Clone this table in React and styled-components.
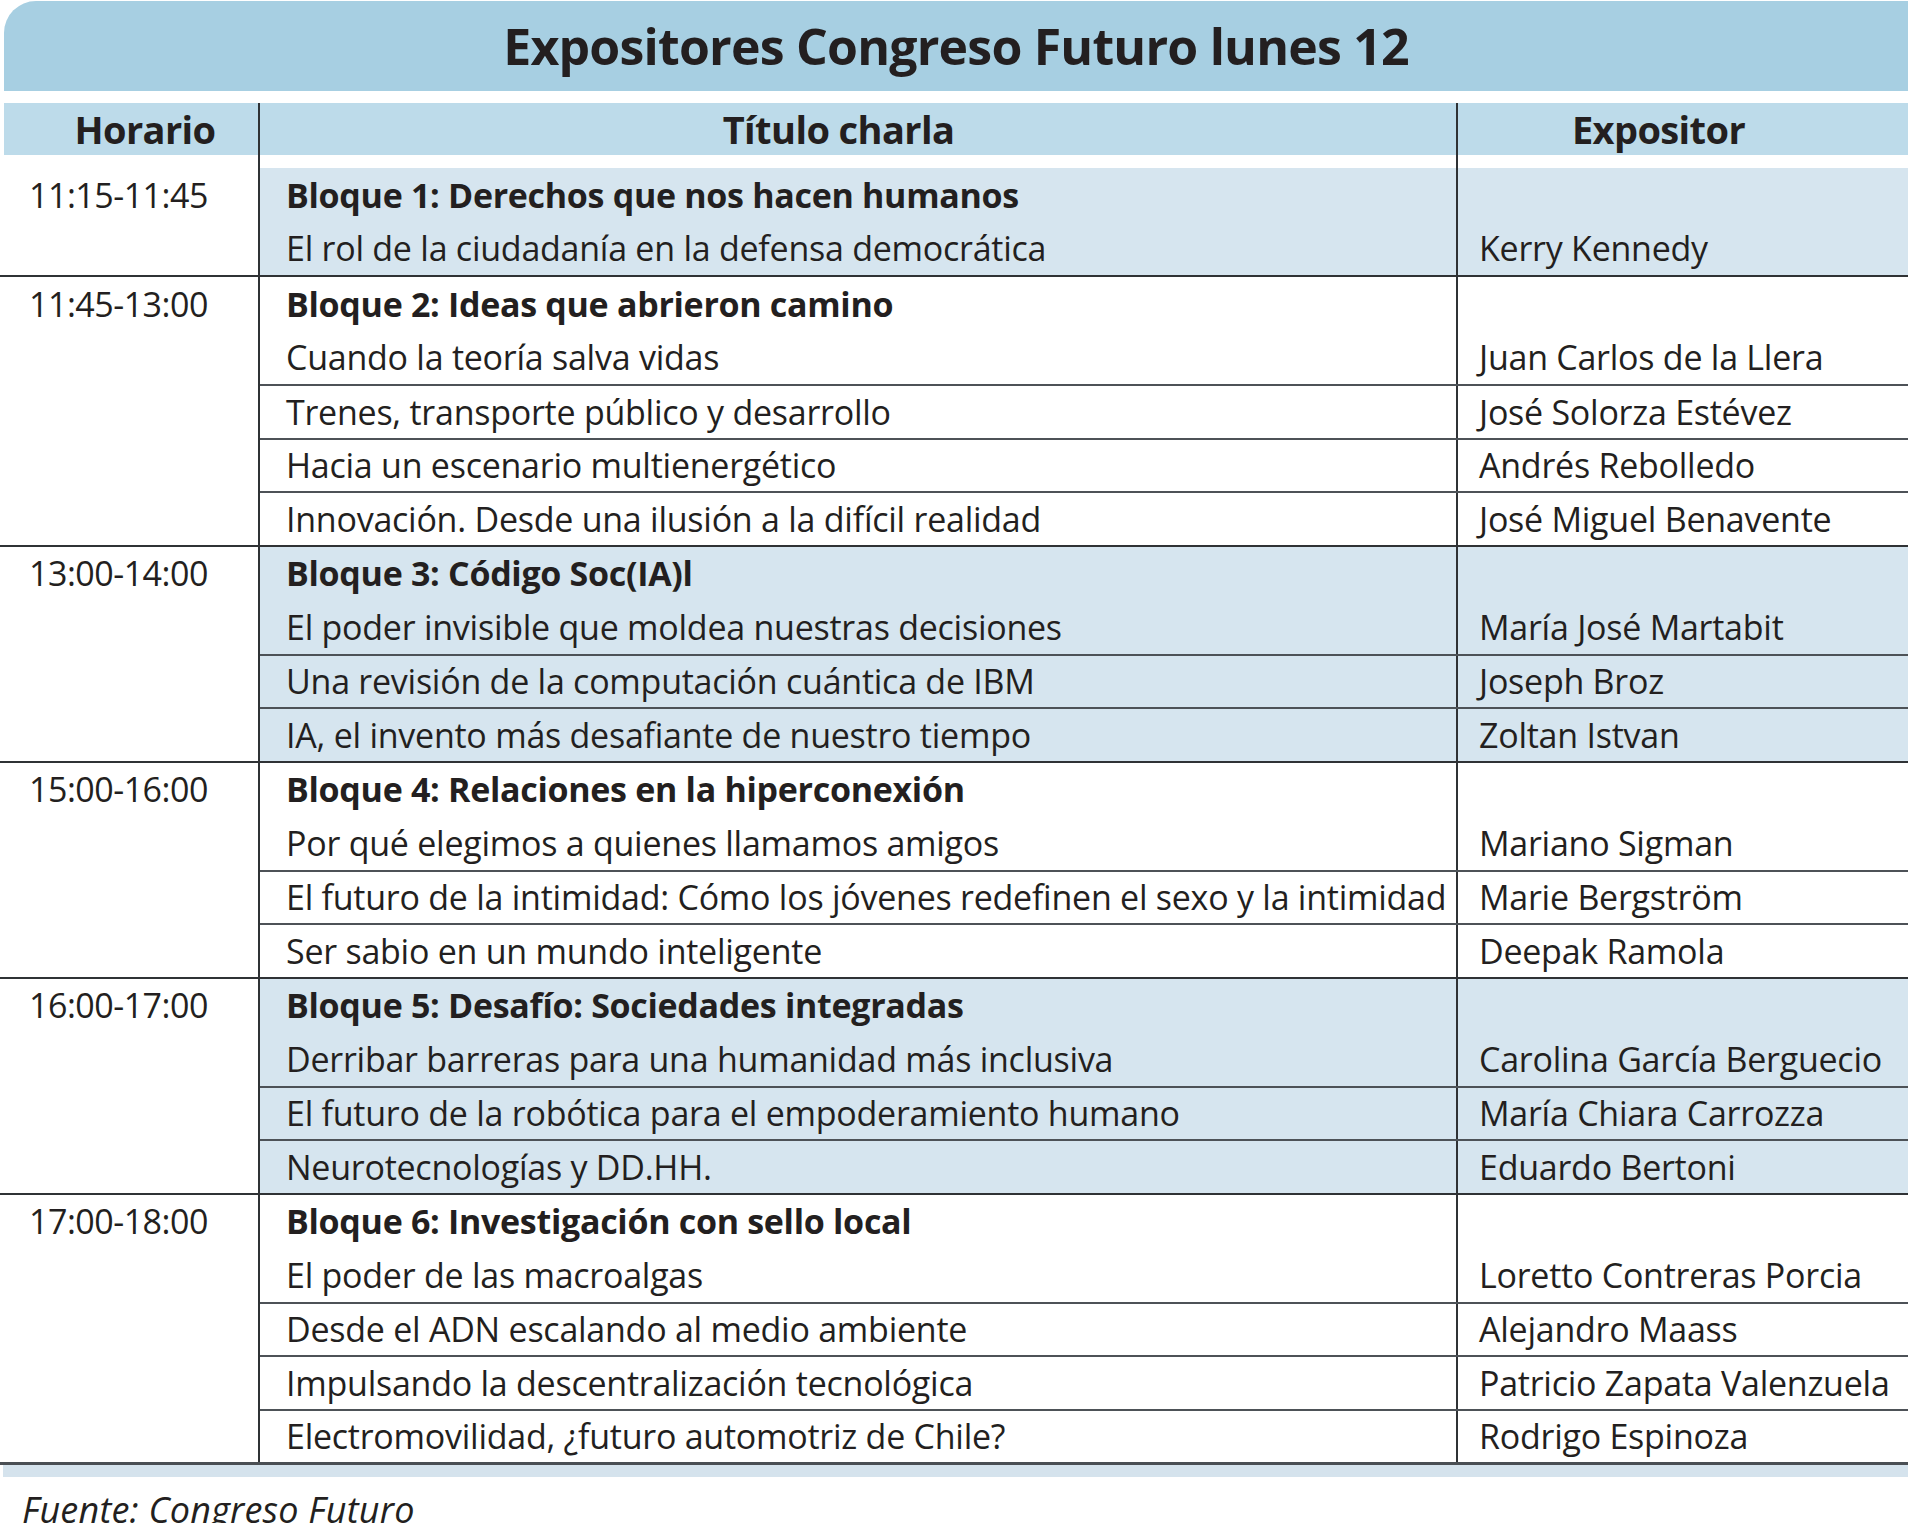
import React from 'react';
import styled, { createGlobalStyle } from 'styled-components';

const GlobalStyle = createGlobalStyle`
    html, body {
        margin: 0;
        padding: 0;
        background: #ffffff;
    }
    body {
        font-family: "Open Sans", "Noto Sans", sans-serif;
        color: #231f20;
    }
`;

const Page = styled.div`
    width: 1908px;
    padding-top: 1px;
`;

const TitleBand = styled.div`
    margin-left: 4px;
    height: 90px;
    background: #a7cfe2;
    border-top-left-radius: 32px;
    display: flex;
    align-items: center;
    justify-content: center;
    font-size: 50px;
    font-weight: 700;
    letter-spacing: -0.8px;
`;

const HeaderRow = styled.div`
    margin-top: 12px;
    margin-left: 4px;
    height: 52px;
    display: grid;
    grid-template-columns: 254px 1198px 1fr;
    background: #bddbea;
`;

// $nudge > 0 pushes the label right, < 0 pulls it left
const HeaderCell = styled.div`
    display: flex;
    align-items: center;
    justify-content: center;
    font-size: 38px;
    font-weight: 700;
    letter-spacing: -0.6px;
    padding-left: ${({ $nudge }) => Math.max($nudge || 0, 0)}px;
    padding-right: ${({ $nudge }) => Math.max(-($nudge || 0), 0)}px;
    border-left: ${({ $line }) => ($line ? '2px solid #2f3235' : 'none')};
`;

const GapRow = styled.div`
    height: 13px;
    display: grid;
    grid-template-columns: 258px 1198px 1fr;
`;

const GapCell = styled.div`
    border-left: ${({ $line }) => ($line ? '2px solid #2f3235' : 'none')};
`;

const Block = styled.div`
    display: grid;
    grid-template-columns: 258px 1fr;
    border-bottom: ${({ $last }) => ($last ? '3px solid #4a4f54' : '2px solid #2f3235')};
`;

const TimeCell = styled.div`
    padding-left: 29px;
    height: 53.5px;
    display: flex;
    align-items: center;
    font-size: 34px;
    letter-spacing: -0.5px;
`;

const Rows = styled.div`
    border-left: 2px solid #2f3235;
`;

const Row = styled.div`
    display: grid;
    grid-template-columns: 1196px 1fr;
    height: 53.5px;
    box-sizing: border-box;
    background: ${({ $shaded }) => ($shaded ? '#d6e5ef' : '#ffffff')};
    border-top: ${({ $divider }) => ($divider ? '2px solid #4d5257' : 'none')};
`;

const Cell = styled.div`
    display: flex;
    align-items: center;
    white-space: nowrap;
    padding-left: ${({ $speaker }) => ($speaker ? '21px' : '26px')};
    font-size: 34px;
    font-weight: ${({ $bold }) => ($bold ? 700 : 400)};
    letter-spacing: ${({ $bold }) => ($bold ? '-0.3px' : '-0.25px')};
    border-left: ${({ $speaker }) => ($speaker ? '2px solid #2f3235' : 'none')};
`;

const BottomStrip = styled.div`
    margin-left: 3px;
    height: 12px;
    background: #d5e3ed;
`;

const Source = styled.div`
    padding: 10px 0 0 22px;
    font-size: 36px;
    line-height: 46px;
    font-style: italic;
    letter-spacing: 0.2px;
`;

const blocks = [
    {
        time: '11:15-11:45',
        title: 'Bloque 1: Derechos que nos hacen humanos',
        shaded: true,
        talks: [['El rol de la ciudadanía en la defensa democrática', 'Kerry Kennedy']],
    },
    {
        time: '11:45-13:00',
        title: 'Bloque 2: Ideas que abrieron camino',
        talks: [
            ['Cuando la teoría salva vidas', 'Juan Carlos de la Llera'],
            ['Trenes, transporte público y desarrollo', 'José Solorza Estévez'],
            ['Hacia un escenario multienergético', 'Andrés Rebolledo'],
            ['Innovación. Desde una ilusión a la difícil realidad', 'José Miguel Benavente'],
        ],
    },
    {
        time: '13:00-14:00',
        title: 'Bloque 3: Código Soc(IA)l',
        shaded: true,
        talks: [
            ['El poder invisible que moldea nuestras decisiones', 'María José Martabit'],
            ['Una revisión de la computación cuántica de IBM', 'Joseph Broz'],
            ['IA, el invento más desafiante de nuestro tiempo', 'Zoltan Istvan'],
        ],
    },
    {
        time: '15:00-16:00',
        title: 'Bloque 4: Relaciones en la hiperconexión',
        talks: [
            ['Por qué elegimos a quienes llamamos amigos', 'Mariano Sigman'],
            ['El futuro de la intimidad: Cómo los jóvenes redefinen el sexo y la intimidad', 'Marie Bergström'],
            ['Ser sabio en un mundo inteligente', 'Deepak Ramola'],
        ],
    },
    {
        time: '16:00-17:00',
        title: 'Bloque 5: Desafío: Sociedades integradas',
        shaded: true,
        talks: [
            ['Derribar barreras para una humanidad más inclusiva', 'Carolina García Berguecio'],
            ['El futuro de la robótica para el empoderamiento humano', 'María Chiara Carrozza'],
            ['Neurotecnologías y DD.HH.', 'Eduardo Bertoni'],
        ],
    },
    {
        time: '17:00-18:00',
        title: 'Bloque 6: Investigación con sello local',
        talks: [
            ['El poder de las macroalgas', 'Loretto Contreras Porcia'],
            ['Desde el ADN escalando al medio ambiente', 'Alejandro Maass'],
            ['Impulsando la descentralización tecnológica', 'Patricio Zapata Valenzuela'],
            ['Electromovilidad, ¿futuro automotriz de Chile?', 'Rodrigo Espinoza'],
        ],
    },
];

const App = () => {
    return (
        <Page>
            <GlobalStyle />
            <TitleBand>Expositores Congreso Futuro lunes 12</TitleBand>
            <HeaderRow>
                <HeaderCell $nudge={28}>Horario</HeaderCell>
                <HeaderCell $line $nudge={-39}>Título charla</HeaderCell>
                <HeaderCell $line $nudge={-49}>Expositor</HeaderCell>
            </HeaderRow>
            <GapRow>
                <GapCell />
                <GapCell $line />
                <GapCell $line />
            </GapRow>
            {blocks.map((block, i) => (
                <Block key={block.time} $last={i === blocks.length - 1}>
                    <TimeCell>{block.time}</TimeCell>
                    <Rows>
                        <Row $shaded={block.shaded}>
                            <Cell $bold>{block.title}</Cell>
                            <Cell $speaker />
                        </Row>
                        {block.talks.map(([talk, speaker], j) => (
                            <Row key={talk} $shaded={block.shaded} $divider={j > 0}>
                                <Cell>{talk}</Cell>
                                <Cell $speaker>{speaker}</Cell>
                            </Row>
                        ))}
                    </Rows>
                </Block>
            ))}
            <BottomStrip />
            <Source>Fuente: Congreso Futuro</Source>
        </Page>
    );
};

export default App;
